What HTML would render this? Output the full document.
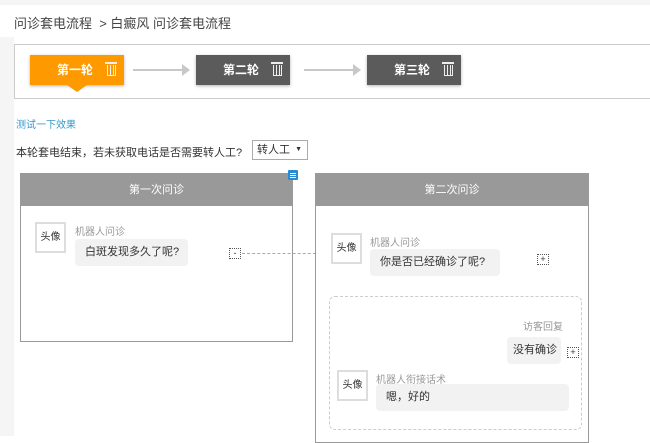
<!DOCTYPE html>
<html><head><meta charset="utf-8"><style>
*{margin:0;padding:0;box-sizing:border-box}
body{width:650px;height:436px;overflow:hidden;background:#fff;font-family:"Liberation Sans","Noto Sans CJK SC",sans-serif;position:relative;color:#333}
.a{position:absolute;white-space:nowrap}
.step{position:absolute;top:55px;width:94px;height:30px;color:#fff;font-size:12px;font-weight:bold;line-height:30px;padding-left:27px;box-shadow:0 1px 3px rgba(0,0,0,.3)}
.step i{position:absolute;right:8px;top:10px;width:9px;height:11px;border:1.5px solid #eee;border-top:none;background:repeating-linear-gradient(90deg,transparent 0 2px,#eee 2px 3px)}
.step i:before{content:"";position:absolute;left:-3px;top:-3px;width:12px;height:2px;background:#eee}
.arr{position:absolute;top:69px;width:50px;height:2px;background:#c8c8c8}
.arr:after{content:"";position:absolute;right:-7px;top:-5px;border-left:8px solid #c8c8c8;border-top:6px solid transparent;border-bottom:6px solid transparent}
.card{position:absolute;border:1px solid #999;background:#fff}
.hd{height:32px;background:#999;color:#fff;font-size:11px;text-align:center;line-height:32px}
.av{position:absolute;width:31px;height:31px;border:2px solid #ddd;font-size:10px;text-align:center;line-height:27px;background:#fff}
.lb{position:absolute;font-size:10px;color:#999;white-space:nowrap}
.bb{position:absolute;background:#f2f2f2;border-radius:4px;font-size:11px;line-height:27px;padding-left:10px;white-space:nowrap;height:27px}
.ic{position:absolute;width:12px;height:11px;border:1px dotted #555;font-size:9px;line-height:8px;text-align:center}
</style></head><body>
<div class="a" style="left:0;top:0;width:650px;height:5px;background:#f5f5f5"></div>
<div class="a" style="left:14px;top:13px;font-size:13px;color:#444">问诊套电流程 &nbsp;&gt; 白癜风 问诊套电流程</div>
<div class="a" style="left:0;top:37px;width:650px;height:399px;background:#f5f5f5"></div>
<div class="a" style="left:14px;top:37px;width:636px;height:399px;background:#fff"></div>
<div class="a" style="left:14px;top:44px;width:640px;height:55px;border:1px solid #ccc;background:#fff"></div>
<div class="step" style="left:30px;background:#f90">第一轮<i></i></div>
<div class="a" style="left:67px;top:85px;border-top:7px solid #f90;border-left:10px solid transparent;border-right:10px solid transparent"></div>
<div class="arr" style="left:133px"></div>
<div class="step" style="left:196px;background:#5b5b5b">第二轮<i></i></div>
<div class="arr" style="left:304px"></div>
<div class="step" style="left:367px;background:#5b5b5b">第三轮<i></i></div>
<div class="a" style="left:16px;top:116px;font-size:10px;color:#3399cc">测试一下效果</div>
<div class="a" style="left:16px;top:144px;font-size:11px">本轮套电结束，若未获取电话是否需要转人工?</div>
<div class="a" style="left:252px;top:140px;width:56px;height:20px;border:1px solid #aaa;font-size:11px;line-height:18px;padding-left:4px">转人工 <span style="position:absolute;right:5px;font-size:7px">▼</span></div>

<div class="card" style="left:20px;top:173px;width:273px;height:169px"><div class="hd">第一次问诊</div></div>
<div class="a" style="left:288px;top:170px;width:10px;height:10px;background:#2a8ad4;border-radius:1px"></div>
<div class="a" style="left:290px;top:173px;width:6px;height:1px;background:#fff;box-shadow:0 2px #fff,0 4px #fff"></div>
<div class="av" style="left:35px;top:222px">头像</div>
<div class="lb" style="left:75px;top:223px">机器人问诊</div>
<div class="bb" style="left:75px;top:239px;width:113px">白斑发现多久了呢?</div>
<div class="ic" style="left:229px;top:248px">-</div>
<div class="a" style="left:242px;top:253px;width:84px;border-top:1px dashed #aaa"></div>
<div class="a" style="left:323px;top:247px;font-size:9px;color:#999">&gt;</div>

<div class="card" style="left:315px;top:173px;width:274px;height:270px"><div class="hd">第二次问诊</div></div>
<div class="av" style="left:331px;top:233px">头像</div>
<div class="lb" style="left:370px;top:234px">机器人问诊</div>
<div class="bb" style="left:370px;top:249px;width:130px">你是否已经确诊了呢?</div>
<div class="ic" style="left:537px;top:254px">+</div>
<div class="a" style="left:329px;top:296px;width:253px;height:134px;border:1px dashed #ccc;border-radius:6px"></div>
<div class="lb" style="left:523px;top:318px">访客回复</div>
<div class="bb" style="left:507px;top:337px;width:54px;padding-left:6px">没有确诊</div>
<div class="ic" style="left:567px;top:347px">+</div>
<div class="av" style="left:337px;top:370px">头像</div>
<div class="lb" style="left:376px;top:371px">机器人衔接话术</div>
<div class="bb" style="left:376px;top:384px;width:193px">嗯，好的</div>
</body></html>
